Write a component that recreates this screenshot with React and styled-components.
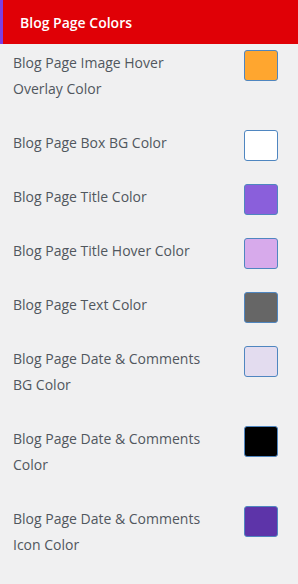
import React from "react";
import styled, { createGlobalStyle } from "styled-components";

const colorOptions = [
  { id: "overlay", label: "Blog Page Image Hover Overlay Color", color: "#ffa62f" },
  { id: "box-bg", label: "Blog Page Box BG Color", color: "#ffffff" },
  { id: "title", label: "Blog Page Title Color", color: "#8a5fdb" },
  { id: "title-hover", label: "Blog Page Title Hover Color", color: "#d7aaeb" },
  { id: "text", label: "Blog Page Text Color", color: "#666666" },
  { id: "date-bg", label: "Blog Page Date & Comments BG Color", color: "#e3dcef" },
  { id: "date", label: "Blog Page Date & Comments Color", color: "#000000" },
  { id: "date-icon", label: "Blog Page Date & Comments Icon Color", color: "#5d34a9" },
];

const GlobalStyle = createGlobalStyle`
  html, body {
    margin: 0;
    padding: 0;
    background: #f0f0f1;
  }
  body {
    font-family: "Open Sans", "Noto Sans", sans-serif;
  }
`;

const App = () => {
  return (
    <Panel>
      <GlobalStyle />
      <Header>Blog Page Colors</Header>
      <List>
        {colorOptions.map(option => (
          <Row key={option.id}>
            <Label>{option.label}</Label>
            <Swatch $color={option.color} type="button" aria-label={option.label} />
          </Row>
        ))}
      </List>
    </Panel>
  );
};

const Panel = styled.div`
  width: 298px;
  min-height: 584px;
  background: #f0f0f1;
`;

const Header = styled.div`
  height: 44px;
  display: flex;
  align-items: center;
  padding-left: 17px;
  background: #e00006;
  border-left: 3px solid #7b3fe4;
  box-sizing: border-box;
  color: #ffffff;
  font-size: 14px;
  font-weight: 600;
`;

const List = styled.div`
  display: flex;
  flex-direction: column;
  gap: 28px;
  padding: 6px 20px 0 13px;
`;

const Row = styled.div`
  display: flex;
  justify-content: space-between;
  align-items: flex-start;
`;

const Label = styled.div`
  width: 200px;
  font-size: 14px;
  line-height: 26px;
  color: #50575e;
`;

const Swatch = styled.button`
  width: 34px;
  height: 31px;
  margin-bottom: -5px;
  padding: 0;
  border: 1px solid #4f86c0;
  border-radius: 3px;
  background: ${p => p.$color};
  cursor: pointer;
`;

export default App;
